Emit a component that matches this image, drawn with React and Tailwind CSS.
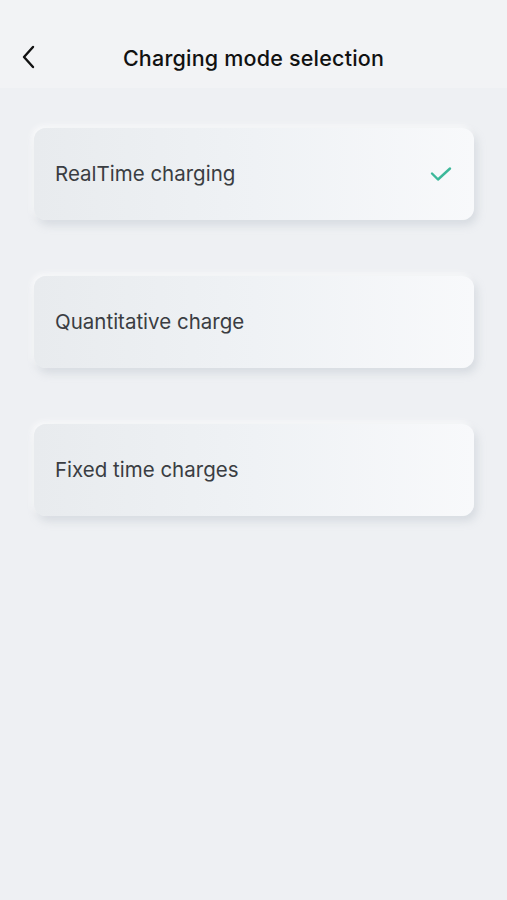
import React from "react";

const items = [
  { label: "RealTime charging", checked: true },
  { label: "Quantitative charge" },
  { label: "Fixed time charges" },
];

export default function App() {
  return (
    <div className="min-h-[900px] w-full bg-[#eef0f3] text-[#222]" style={{ fontFamily: "Inter, 'Noto Sans', sans-serif" }}>
      <div className="relative flex h-[88px] items-center justify-center bg-[#f2f3f5]">
        <button className="absolute left-[18px] top-[43px] flex h-[28px] w-[22px] items-center justify-center">
          <svg width="16" height="24" viewBox="0 0 16 24" fill="none">
            <path d="M12 2 L3 12 L12 22" stroke="#111" strokeWidth="2.4" strokeLinecap="round" strokeLinejoin="round" />
          </svg>
        </button>
        <h1 className="mt-[28px] text-[21.5px] font-medium tracking-[0.2px] text-[#111]">Charging mode selection</h1>
      </div>
      <div className="flex flex-col gap-[56px] pl-[34px] pr-[33px] pt-[40px]">
        {items.map((it) => (
          <div
            key={it.label}
            className="flex h-[92px] items-center justify-between rounded-[12px] bg-gradient-to-r from-[#e8ebee] via-[#eff2f5] to-[#f8f9fb] pl-[21px] pr-[22px] shadow-[3px_5px_8px_rgba(170,178,190,0.35),-2px_-2px_6px_rgba(255,255,255,0.8)]"
          >
            <span className="text-[20.5px] text-[#3a3d42]">{it.label}</span>
            {it.checked && (
              <svg width="22" height="16" viewBox="0 0 22 16" fill="none">
                <path d="M2 7.5 L8 13.5 L20 2.5" stroke="#3cb89a" strokeWidth="2.4" strokeLinecap="round" strokeLinejoin="round" />
              </svg>
            )}
          </div>
        ))}
      </div>
    </div>
  );
}
